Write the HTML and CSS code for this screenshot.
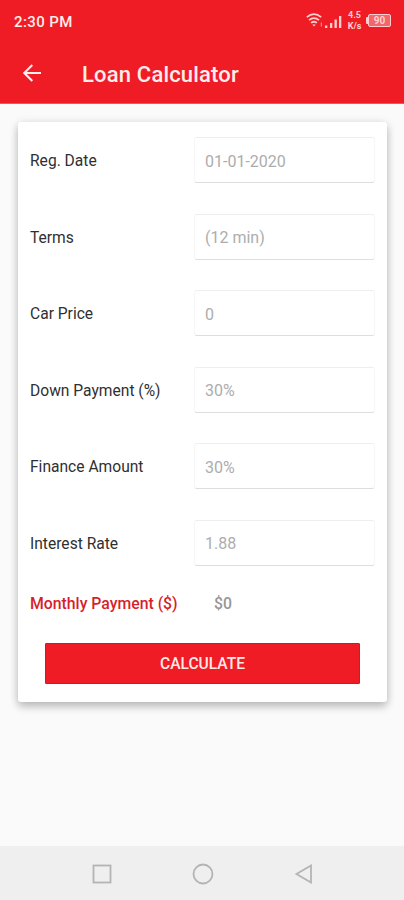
FILE: index.html
```html
<!DOCTYPE html>
<html lang="en">
<head>
<meta charset="utf-8">
<meta name="viewport" content="width=device-width, initial-scale=1">
<title>Loan Calculator</title>
<link rel="stylesheet" href="styles.css">
</head>
<body>
<header class="header">
  <div class="status">
    <span class="time">2:30 PM</span>
    <div class="indicators">
      <svg class="wifi" width="18" height="15" viewBox="0 0 18 15" fill="none" stroke="currentColor" stroke-width="1.7">
        <path d="M.8 4.2Q8 -1.8 15.2 4.2M3 7.1Q8 3 13 7.1M5.1 9.9Q8 7.6 10.9 9.9"/>
        <path d="M6.3 11.5h3.4L8 13.6z" fill="currentColor" stroke="none"/>
        <path d="M15.3 9.5v4" stroke-width="1" opacity=".7"/>
      </svg>
      <svg class="signal" width="17" height="13" viewBox="0 0 17 13" fill="currentColor">
        <path d="M0 10.5h2.3V13H0zM5 8h2.3v5H5zM9.5 4.500h2.3V13H9.500zM14 1h2.3v12H14z"/>
      </svg>
      <span class="speed"><span>4.5</span><span>K/s</span></span>
      <span class="battery"><span>90</span></span>
    </div>
  </div>
  <div class="toolbar">
    <svg class="back" width="20" height="20" viewBox="0 0 20 20" fill="none" stroke="currentColor" stroke-width="2.1">
      <path d="M19 10H3M10.300 2L2.300 10l8 8"/>
    </svg>
    <h1>Loan Calculator</h1>
  </div>
</header>
<main class="content">
  <section class="card">
    <div class="fields">
      <div class="row"><span class="label">Reg. Date</span><div class="field">01-01-2020</div></div>
      <div class="row"><span class="label">Terms</span><div class="field">(12 min)</div></div>
      <div class="row"><span class="label">Car Price</span><div class="field">0</div></div>
      <div class="row"><span class="label">Down Payment (%)</span><div class="field">30%</div></div>
      <div class="row"><span class="label">Finance Amount</span><div class="field">30%</div></div>
      <div class="row"><span class="label">Interest Rate</span><div class="field">1.88</div></div>
    </div>
    <div class="result"><span class="result-label">Monthly Payment ($)</span><span class="result-value">$0</span></div>
    <button class="calculate" type="button">CALCULATE</button>
  </section>
</main>
<nav class="navbar">
  <svg width="20" height="20" viewBox="0 0 20 20"><rect x="1.500" y="1.500" width="17" height="17"/></svg>
  <svg width="22" height="22" viewBox="0 0 22 22"><circle cx="11" cy="11" r="9.500"/></svg>
  <svg width="20" height="20" viewBox="0 0 20 20"><path d="M17 1.500v17L2.500 10z"/></svg>
</nav>
</body>
</html>
```
FILE: styles.css
```css
* {
  box-sizing: border-box;
}

body {
  margin: 0;
  height: 900px;
  display: flex;
  flex-direction: column;
  overflow: hidden;
  background: #fafafa;
  font-family: Roboto, "Liberation Sans", sans-serif;
  color: #303030;
}

.header {
  height: 104px;
  background: #ef1c25;
  color: #ffeceb;
  border-bottom: 1px solid #f0555b;
}

.status {
  height: 43px;
  padding: 0 13px 0 14px;
  display: flex;
  align-items: center;
  justify-content: space-between;
}

.time {
  font-size: 15px;
  font-weight: 500;
  letter-spacing: 0.4px;
}

.indicators {
  display: flex;
  align-items: center;
  height: 40px;
  margin-top: -2px;
  color: #ffd0cf;
}

.signal {
  margin: 1px 5px 0 1px;
}

.speed {
  display: flex;
  flex-direction: column;
  width: 15px;
  margin-right: 4px;
  align-items: center;
  font-size: 9px;
  line-height: 10.500px;
  font-weight: 700;
}

.battery {
  position: relative;
  display: flex;
  align-items: center;
  justify-content: center;
  width: 23px;
  height: 13px;
  margin-left: 2px;
  border: 1.500px solid currentColor;
  border-radius: 2px;
  background: #f4666b;
  font-size: 10px;
  font-weight: 700;
  line-height: 10px;
}

.battery::before {
  content: "";
  position: absolute;
  left: -3px;
  top: 2px;
  width: 2px;
  height: 7px;
  border-radius: 1px 0 0 1px;
  background: currentColor;
}

.toolbar {
  height: 60px;
  padding-left: 22px;
  display: flex;
  align-items: center;
}

.toolbar h1 {
  margin: 3px 0 0 40px;
  font-size: 22px;
  line-height: 28px;
  font-weight: 500;
  letter-spacing: 0.180px;
}

.content {
  flex: 1;
  padding: 18px 17px 0 18px;
}

.card {
  height: 580px;
  padding: 15px 12px 0;
  display: flex;
  flex-direction: column;
  background: #fff;
  border-radius: 3px;
  box-shadow: 0 5px 9px rgba(0, 0, 0, 0.2), 0 1px 10px rgba(0, 0, 0, 0.12);
}

.fields {
  display: flex;
  flex-direction: column;
  gap: 30.500px;
}

.row {
  height: 46px;
  display: grid;
  grid-template-columns: 164px 1fr;
  align-items: center;
}

.label {
  padding-top: 2px;
  font-size: 15.600px;
  line-height: 20px;
}

.field {
  height: 46px;
  padding: 2px 10px 0;
  display: flex;
  align-items: center;
  border: 1px solid #f6f6f6;
  border-top-color: #eeeeee;
  border-bottom-color: #dedede;
  border-radius: 3px;
  color: #adadad;
  font-size: 16px;
}

.result {
  height: 20px;
  margin-top: 28px;
  display: grid;
  grid-template-columns: 184px 1fr;
  align-items: center;
  font-size: 15.800px;
  font-weight: 500;
}

.result-label {
  color: #d71f2b;
}

.result-value {
  color: #979797;
}

.calculate {
  height: 41px;
  margin: 29px 15px 0;
  padding: 2px 0 0;
  border: 1px solid #e0131d;
  border-radius: 1px;
  background: #ef1c25;
  color: #ffe9e8;
  font: 500 15.600px Roboto, "Liberation Sans", sans-serif;
}

.navbar {
  height: 54px;
  padding: 1px 0 0 91.500px;
  display: flex;
  align-items: center;
  gap: 80px;
  background: #efefef;
}

.navbar svg {
  fill: none;
  stroke: #b4b4b4;
  stroke-width: 1.800;
}
```
